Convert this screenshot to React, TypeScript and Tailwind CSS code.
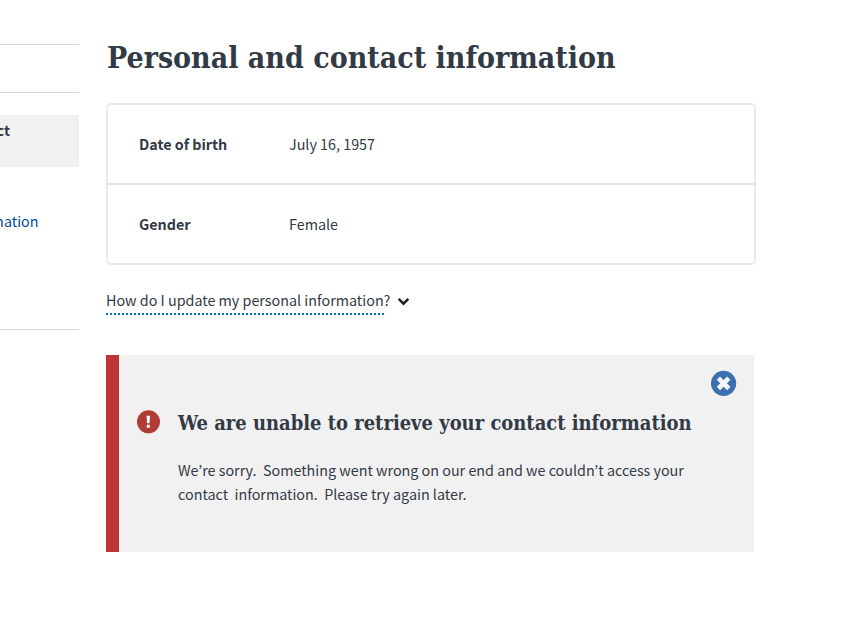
import React from "react";

const sans = "font-['Noto_Sans_CJK_KR','Noto_Sans',sans-serif]";
const serif = "font-['DejaVu_Serif_Condensed','DejaVu_Serif',serif] font-bold [font-stretch:condensed]";

function Sidebar() {
  return (
    <nav className="mt-11 h-[286px] w-[79px] shrink-0 overflow-hidden border-y border-[#d6d7d9]">
      <div className="h-12 border-b border-[#d6d7d9]" />
      <div className="mt-[22px] flex h-[52px] bg-[#f1f1f1] pt-[3px]">
        <span className="flex w-[10px] justify-end whitespace-nowrap text-[14.33px] leading-6 font-bold">ct</span>
      </div>
      <a className="mt-[42px] flex w-[38.5px] justify-end whitespace-nowrap text-[14.33px] leading-6 text-[#004b9b]">mation</a>
    </nav>
  );
}

function Row({ label, value }: { label: string; value: string }) {
  return (
    <div className="flex h-[78px] items-center pl-[31px] text-[14.33px] leading-6">
      <dt className="w-[150px] font-bold">{label}</dt>
      <dd>{value}</dd>
    </div>
  );
}

function Alert() {
  return (
    <section className="mt-10 flex h-[197px] w-[648px] border-l-[13px] border-[#be3432] bg-[#f1f1f1]">
      <svg className="mt-[55px] ml-[18px] shrink-0" width="24" height="24" viewBox="0 0 24 24">
        <circle cx="11.5" cy="11.8" r="11.5" fill="#b03c36" />
        <path d="M9.6 5.8h3.4l-.5 7.4h-2.4z" fill="#fff" />
        <rect x="9.7" y="14.7" width="3.2" height="3" rx=".7" fill="#fff" />
      </svg>
      <div className="ml-[17px] w-[532px] shrink-0 pt-[52px]">
        <h2 className={`${serif} whitespace-nowrap text-[19.97px] leading-8`}>We are unable to retrieve your contact information</h2>
        <p className="mt-[19px] whitespace-pre text-[14.33px] leading-6">{"We’re sorry.  Something went wrong on our end and we couldn’t access your\ncontact  information.  Please try again later."}</p>
      </div>
      <svg className="mt-[15px] shrink-0" width="27" height="27" viewBox="0 0 27 27">
        <circle cx="13.6" cy="13.3" r="12.6" fill="#3c70b1" />
        <path d="M8.4 8.1l10.4 10.4M18.8 8.1l-10.4 10.4" stroke="#f5f6f7" strokeWidth="4.6" />
      </svg>
    </section>
  );
}

export default function App() {
  return (
    <div className={`${sans} flex h-[638px] w-[862px] overflow-hidden bg-white text-[#323a45]`}>
      <Sidebar />
      <main className="ml-[27px] w-[650px] pt-[37px]">
        <h1 className={`${serif} ml-px whitespace-nowrap text-[30px] leading-[42px]`}>Personal and contact information</h1>
        <dl className="mt-6 w-[650px] rounded-[5px] border-2 border-[#e9e9e9]">
          <Row label="Date of birth" value="July 16, 1957" />
          <div className="-mx-px h-0.5 bg-[#e1e1e1]" />
          <Row label="Gender" value="Female" />
        </dl>
        <div className="mt-[23px] flex h-[27px] items-start text-[14.33px] leading-6">
          <div className="w-[278px] whitespace-nowrap">
            How do I update my personal information?
            <svg className="mt-px block" width="278" height="2" viewBox="0 0 278 2">
              <path d="M0 1h278" stroke="#0071bb" strokeWidth="2" strokeDasharray="2 2" />
            </svg>
          </div>
          <svg className="mt-2 ml-[13px]" width="13" height="12" viewBox="0 0 13 12">
            <path d="M1.7 2.9l4.8 4.8 4.8-4.8" fill="none" stroke="#212121" strokeWidth="2.5" />
          </svg>
        </div>
        <Alert />
      </main>
    </div>
  );
}
